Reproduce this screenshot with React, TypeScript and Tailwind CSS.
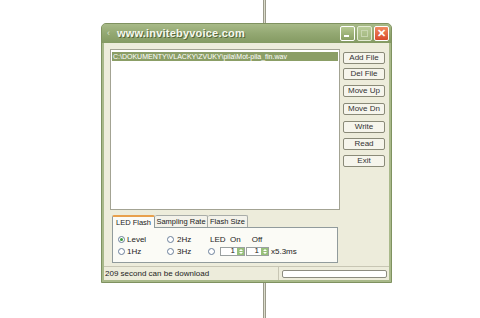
import React from "react"

const font = { fontFamily: '"Liberation Sans", Arial, sans-serif' }

function WinBtn({ label, mt }: { label: string; mt: string }) {
  return (
    <button
      className={`${mt} h-[12px] w-[42px] rounded-[2px] border border-[#8a8a78] bg-[#f6f5ec] text-[8px] leading-[10px] text-[#333]`}
    >
      {label}
    </button>
  )
}

function Radio({ checked }: { checked?: boolean }) {
  return (
    <span className="flex h-[7px] w-[7px] items-center justify-center rounded-full border border-[#6a7f9a] bg-white">
      {checked && <span className="h-[3px] w-[3px] rounded-full bg-[#3c9a3c]" />}
    </span>
  )
}

function Spin({ w }: { w: string }) {
  return (
    <div className={`flex h-[9px] ${w} items-center border border-[#9aa0a0] bg-white`}>
      <span className="flex-1 pr-[2px] text-right text-[8px] leading-[8px]">1</span>
      <span className="flex h-[7px] w-[7px] flex-col items-center justify-center gap-[1px] bg-[#98c07a]">
        <span className="h-0 w-0 border-x-[2px] border-b-[2px] border-x-transparent border-b-white" />
        <span className="h-0 w-0 border-x-[2px] border-t-[2px] border-x-transparent border-t-white" />
      </span>
    </div>
  )
}

export default function App() {
  return (
    <div className="h-[318px] w-[480px] overflow-hidden bg-white" style={font}>
      <div className="ml-[101px] flex w-[291px] flex-col">
        <div className="ml-[162px] h-[23px] w-[3px] border-x border-[#9a9a8a] bg-[#dcdccc]" />

        <div className="flex h-[260px] flex-col rounded-t-[5px] border border-[#7f9260] bg-[#a9b98a]">
          {/* title bar */}
          <div className="flex h-[19px] items-center rounded-t-[4px] bg-gradient-to-b from-[#a8ba88] via-[#93a872] to-[#849a62] pl-[5px] pr-[2px]">
            <span className="text-[9px] text-[#d8e0c8]">‹</span>
            <span
              className="ml-[7px] text-[11px] font-bold tracking-[0.2px] text-[#f6f8ee]"
              style={{ textShadow: "1px 1px 0 #55663a" }}
            >
              www.invitebyvoice.com
            </span>
            <div className="ml-auto flex gap-[2px]">
              <span className="relative h-[15px] w-[15px] rounded-[2px] border border-white bg-gradient-to-b from-[#b5c890] to-[#8aa064]">
                <span className="absolute bottom-[3px] left-[3px] h-[2px] w-[5px] bg-white" />
              </span>
              <span className="relative h-[15px] w-[15px] rounded-[2px] border border-[#e4ecd4] bg-gradient-to-b from-[#b9cc98] to-[#9fb47c]">
                <span className="absolute left-[3px] top-[3px] h-[7px] w-[7px] border border-[#c8d6b0]" />
              </span>
              <span className="flex h-[15px] w-[15px] items-center justify-center rounded-[2px] border border-white bg-gradient-to-b from-[#f08a60] to-[#d8482a] text-[11px] font-bold leading-none text-white">
                ✕
              </span>
            </div>
          </div>

          {/* body */}
          <div className="mx-[2px] mb-[2px] flex flex-1 flex-col bg-[#edecdb]">
            <div className="flex pl-[6px] pt-[6px]">
              <div className="h-[161px] w-[230px] border border-[#a3a393] bg-white pl-[1px] pt-[2px]">
                <div className="h-[9px] w-[226px] bg-[#8b9e66] pl-[1px] text-[7px] leading-[9px] text-white">
                  C:\DOKUMENTY\VLACKY\ZVUKY\pila\Mot-pila_fin.wav
                </div>
              </div>
              <div className="ml-[3px] flex flex-col pt-[3px]">
                <WinBtn label="Add File" mt="mt-0" />
                <WinBtn label="Del File" mt="mt-[4px]" />
                <WinBtn label="Move Up" mt="mt-[5px]" />
                <WinBtn label="Move Dn" mt="mt-[6px]" />
                <WinBtn label="Write" mt="mt-[6px]" />
                <WinBtn label="Read" mt="mt-[5px]" />
                <WinBtn label="Exit" mt="mt-[5px]" />
              </div>
            </div>

            {/* tabs */}
            <div className="ml-[8px] mt-[4px] flex flex-col">
              <div className="flex h-[13px] items-end text-[7.5px] text-[#222]">
                <span className="relative z-10 -mb-px flex h-[13px] w-[43px] items-center justify-center rounded-t-[2px] border-x border-t-2 border-[#e8a04c] border-x-[#919b9c] bg-[#fbfbf7]">
                  LED Flash
                </span>
                <span className="flex h-[12px] w-[53px] items-center justify-center rounded-t-[2px] border-r border-t border-[#a8aca8] bg-[#f3f2ea]">
                  Sampling Rate
                </span>
                <span className="flex h-[12px] w-[40px] items-center justify-center rounded-t-[2px] border-r border-t border-[#a8aca8] bg-[#f3f2ea]">
                  Flash Size
                </span>
              </div>
              <div className="flex h-[36px] w-[226px] flex-col justify-center gap-[3px] border border-[#919b9c] bg-[#fbfbf6] pl-[5px] text-[8px] leading-[9px] text-[#222]">
                <div className="flex items-center">
                  <div className="flex w-[49px] items-center gap-[2px]">
                    <Radio checked />
                    <span>Level</span>
                  </div>
                  <div className="flex w-[43px] items-center gap-[3px]">
                    <Radio />
                    <span>2Hz</span>
                  </div>
                  <span className="text-[#222]">LED&nbsp; On</span>
                  <span className="ml-[11px] text-[#222]">Off</span>
                </div>
                <div className="flex items-center">
                  <div className="flex w-[49px] items-center gap-[2px]">
                    <Radio />
                    <span>1Hz</span>
                  </div>
                  <div className="flex w-[41px] items-center gap-[3px]">
                    <Radio />
                    <span>3Hz</span>
                  </div>
                  <Radio />
                  <div className="ml-[5px] flex items-center gap-[1px]">
                    <Spin w="w-[25px]" />
                    <Spin w="w-[23px]" />
                    <span className="ml-[1px]">x5.3ms</span>
                  </div>
                </div>
              </div>
            </div>

            {/* status bar */}
            <div className="mt-auto flex h-[14px] items-center border-t border-[#c8c6b4] text-[8px] text-[#222]">
              <span className="w-[174px] pl-[1px]">209 second can be download</span>
              <span className="h-full w-px bg-[#c8c6b4]" />
              <span className="ml-[3px] h-[8px] w-[105px] rounded-[2px] border border-[#8c8c80] bg-white" />
            </div>
          </div>
        </div>

        <div className="ml-[162px] h-[35px] w-[3px] border-x border-[#9a9a8a] bg-[#dcdccc]" />
      </div>
    </div>
  )
}
